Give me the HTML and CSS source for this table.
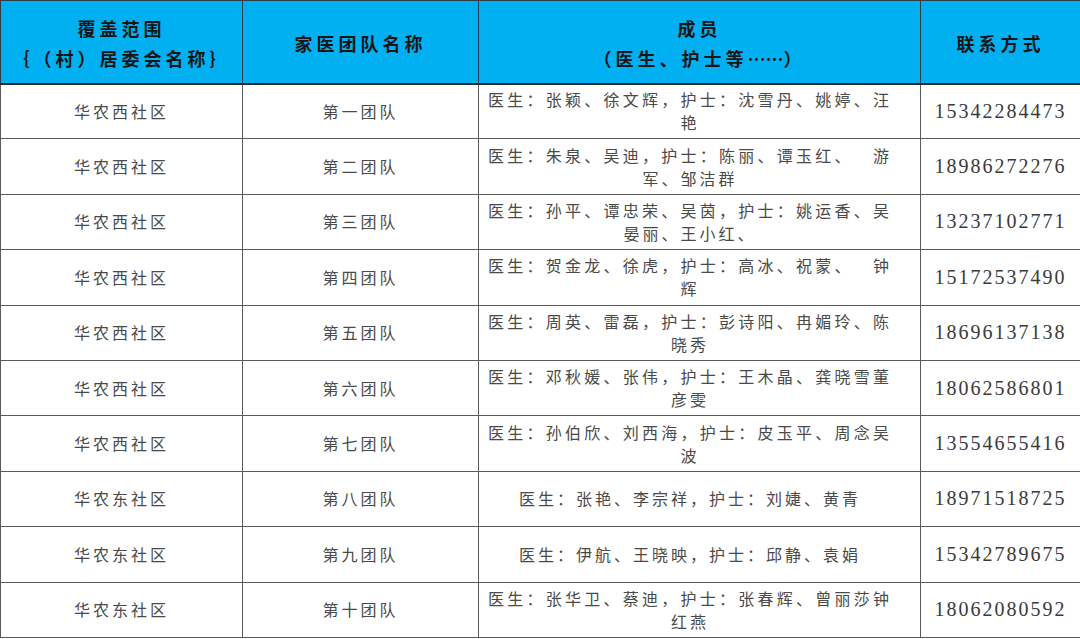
FILE: index.html
```html
<!DOCTYPE html>
<html lang="zh-CN">
<head>
<meta charset="utf-8">
<link rel="stylesheet" href="styles.css">
<title>家医团队</title>
</head>
<body>
<table class="teams">
  <colgroup>
    <col class="c-area">
    <col class="c-team">
    <col class="c-members">
    <col class="c-phone">
  </colgroup>
  <thead>
    <tr class="head-row">
      <th>覆盖范围<br>｛（村）居委会名称｝</th>
      <th>家医团队名称</th>
      <th>成员<br>（医生、护士等<span class="dots">……</span>）</th>
      <th>联系方式</th>
    </tr>
  </thead>
  <tbody>
    <tr><td class="area">华农西社区</td><td class="team">第一团队</td><td class="members">医生：张颖、徐文辉，护士：沈雪丹、姚婷、汪艳</td><td class="phone">15342284473</td></tr>
    <tr><td class="area">华农西社区</td><td class="team">第二团队</td><td class="members">医生：朱泉、吴迪，护士：陈丽、谭玉红、　游军、邹洁群</td><td class="phone">18986272276</td></tr>
    <tr><td class="area">华农西社区</td><td class="team">第三团队</td><td class="members">医生：孙平、谭忠荣、吴茵，护士：姚运香、吴晏丽、王小红、</td><td class="phone">13237102771</td></tr>
    <tr><td class="area">华农西社区</td><td class="team">第四团队</td><td class="members">医生：贺金龙、徐虎，护士：高冰、祝蒙、　钟辉</td><td class="phone">15172537490</td></tr>
    <tr><td class="area">华农西社区</td><td class="team">第五团队</td><td class="members">医生：周英、雷磊，护士：彭诗阳、冉媚玲、陈晓秀</td><td class="phone">18696137138</td></tr>
    <tr><td class="area">华农西社区</td><td class="team">第六团队</td><td class="members">医生：邓秋媛、张伟，护士：王木晶、龚晓雪董彦雯</td><td class="phone">18062586801</td></tr>
    <tr><td class="area">华农西社区</td><td class="team">第七团队</td><td class="members">医生：孙伯欣、刘西海，护士：皮玉平、周念吴波</td><td class="phone">13554655416</td></tr>
    <tr><td class="area">华农东社区</td><td class="team">第八团队</td><td class="members">医生：张艳、李宗祥，护士：刘婕、黄青</td><td class="phone">18971518725</td></tr>
    <tr><td class="area">华农东社区</td><td class="team">第九团队</td><td class="members">医生：伊航、王晓映，护士：邱静、袁娟</td><td class="phone">15342789675</td></tr>
    <tr><td class="area">华农东社区</td><td class="team">第十团队</td><td class="members">医生：张华卫、蔡迪，护士：张春辉、曾丽莎钟红燕</td><td class="phone">18062080592</td></tr>
  </tbody>
</table>
</body>
</html>
```

FILE: styles.css
```css
html, body {
  margin: 0;
  padding: 0;
  background: #ffffff;
}

body {
  font-family: "Noto Sans CJK SC", "Noto Sans", sans-serif;
  width: 1080px;
  height: 639px;
  overflow: hidden;
}

.teams {
  width: 1080px;
  border-collapse: collapse;
  table-layout: fixed;
  text-spacing-trim: space-all;
}

.c-area { width: 242px; }
.c-team { width: 236px; }
.c-members { width: 442px; }
.c-phone { width: 160px; }

.teams th,
.teams td {
  border: 1px solid #5a5a5a;
  padding: 0;
  vertical-align: middle;
}

.head-row {
  height: 83px;
  background: #00b0f0;
}

.head-row th {
  font-size: 18px;
  font-weight: 700;
  color: #151515;
  line-height: 30px;
  letter-spacing: 4px;
  text-align: center;
  border-color: #2c3e48;
  border-bottom: 2px solid #2a2a2a;
  padding-top: 3px;
}

.head-row .dots {
  letter-spacing: 0;
}

.teams tbody tr {
  height: 55.4px;
}

.teams td {
  font-size: 16px;
  color: #4a4a4a;
  letter-spacing: 3px;
  line-height: 23px;
  text-align: center;
}

.teams td.members {
  text-align: justify;
  text-align-last: center;
  padding: 0 28px 0 9px;
}

.teams td.phone {
  font-family: "Liberation Serif", "Times New Roman", serif;
  font-size: 20px;
  letter-spacing: 2px;
  color: #3a3a3a;
}
```
